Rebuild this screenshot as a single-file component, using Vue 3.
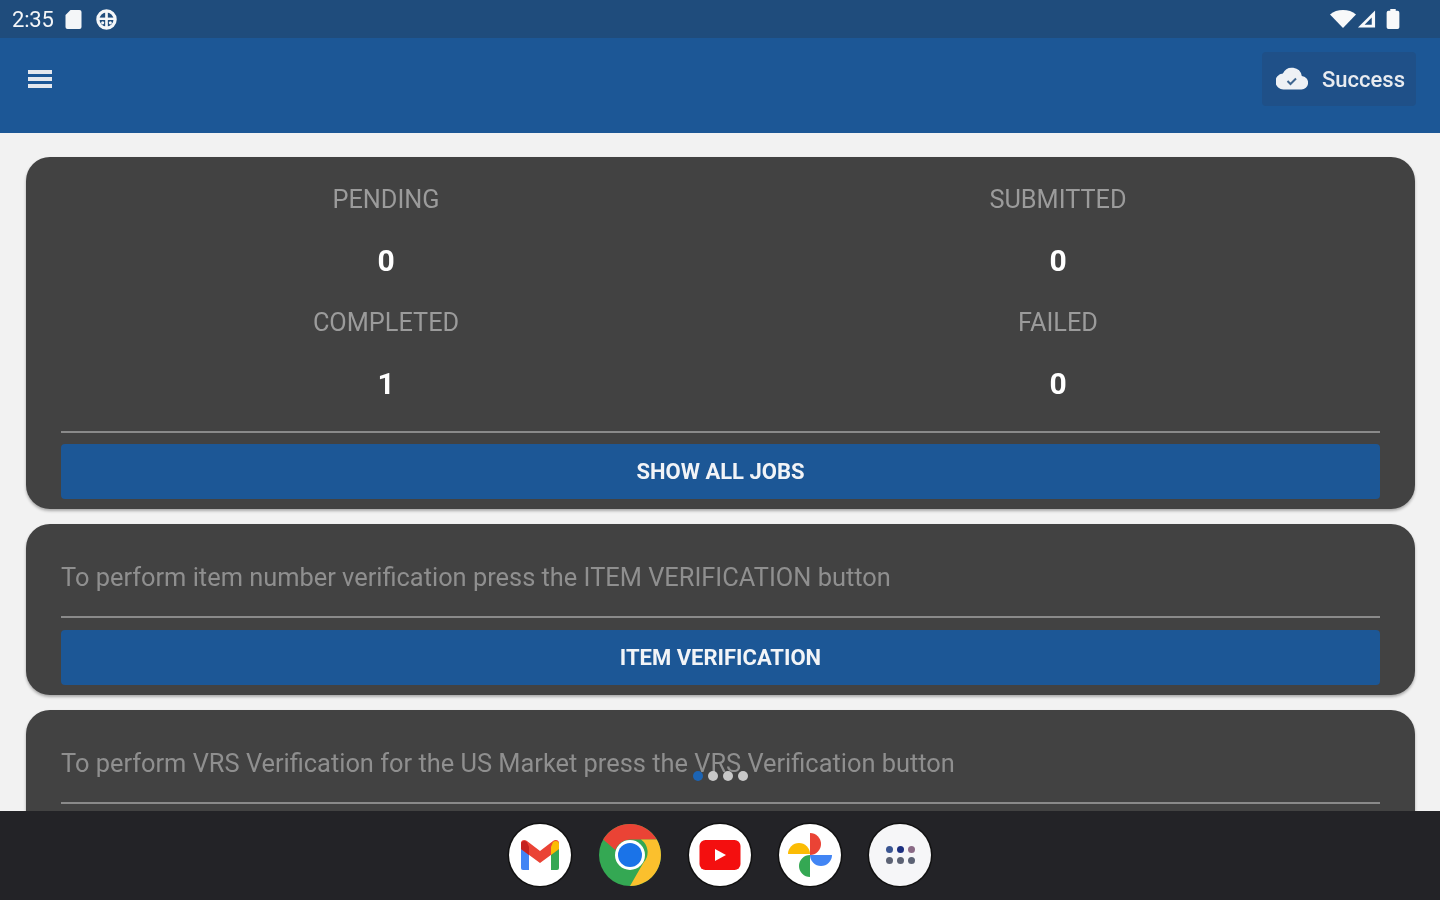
<template>
  <div class="screen">
    <div class="statusBar">
      <div class="statusLeft">
        <span class="clock">2:35</span>
        <svg class="sd" viewBox="0 0 16 20" width="17" height="20">
          <path d="M5 1h9a2 2 0 0 1 2 2v15a2 2 0 0 1-2 2H2a2 2 0 0 1-2-2V6z" fill="#f4f6f8" />
        </svg>
        <svg class="globe" viewBox="0 0 24 24" width="23" height="23">
          <circle cx="12" cy="12" r="9" fill="none" stroke="#f4f6f8" stroke-width="3.4" />
          <path d="M3 10h18v2.500H3z" fill="#f4f6f8" />
          <path d="M10.600 3h2.800v18h-2.800z" fill="#f4f6f8" />
          <circle cx="8" cy="15.500" r="1.600" fill="#f4f6f8" />
          <circle cx="16" cy="15.500" r="1.600" fill="#f4f6f8" />
        </svg>
      </div>
      <div class="statusRight">
        <svg viewBox="0 0 26 20" width="26" height="20">
          <path d="M0 5.500C3.500 2.400 8 1 13 1s9.500 1.400 13 4.500L13 19z" fill="#f8f9fa" />
        </svg>
        <svg viewBox="0 0 20 20" width="19" height="20">
          <path d="M19 1v18H1z" fill="#f8f9fa" />
          <path d="M15.500 8.500v7.500H8z" fill="#1f4c7c" />
        </svg>
        <svg viewBox="0 0 14 22" width="14" height="20">
          <path d="M4 2V0h6v2h2a2 2 0 0 1 2 2v16a2 2 0 0 1-2 2H2a2 2 0 0 1-2-2V4a2 2 0 0 1 2-2z" fill="#f8f9fa" />
        </svg>
      </div>
    </div>

    <header class="appBar">
      <button class="menu" aria-label="Menu">
        <span></span><span></span><span></span>
      </button>
      <div class="sync">
        <svg viewBox="0 0 32 24" width="32" height="24">
          <path d="M25.800 9.100A10 10 0 0 0 6.900 6.500 8 8 0 0 0 8 22.500h17a6.700 6.700 0 0 0 .8-13.400z" fill="#eef1f5" />
          <path d="M11.500 14l3 3 5.500-5.500" fill="none" stroke="#3f6690" stroke-width="2" />
        </svg>
        <span>Success</span>
      </div>
    </header>

    <main class="content">
      <section class="card">
        <div class="stats">
          <div v-for="s in stats" :key="s.label" class="stat">
            <div class="statLabel">{{ s.label }}</div>
            <div class="statValue">{{ s.value }}</div>
          </div>
        </div>
        <div class="rule statsRule"></div>
        <button class="action">SHOW ALL JOBS</button>
      </section>

      <section class="card">
        <p class="hint">To perform item number verification press the ITEM VERIFICATION button</p>
        <div class="rule"></div>
        <button class="action">ITEM VERIFICATION</button>
      </section>

      <section class="card">
        <p class="hint">To perform VRS Verification for the US Market press the VRS Verification button</p>
        <div class="rule"></div>
        <button class="action">VRS VERIFICATION</button>
      </section>
    </main>

    <div class="pager">
      <i class="on"></i><i></i><i></i><i></i>
    </div>

    <footer class="dock">
      <div class="app">
        <svg viewBox="0 0 40 32" width="40" height="32">
          <path d="M1 9v20a2 2 0 0 0 2 2h6V14z" fill="#4285f4" />
          <path d="M31 14v17h6a2 2 0 0 0 2-2V9z" fill="#34a853" />
          <path d="M1 4v6l19 14 19-14V4c0-3-3.500-4-6-2L20 12 7 2C4.500 0 1 1 1 4z" fill="#ea4335" />
          <path d="M31 8v8l8-6V5c0-3-3.500-4-6-2z" fill="#fbbc04" />
          <path d="M1 5v5l8 6V8L7 3C4.500 1 1 2 1 5z" fill="#c5221f" />
        </svg>
      </div>
      <div class="app chrome">
        <svg viewBox="0 0 62 62" width="62" height="62">
          <circle cx="31" cy="31" r="31" fill="#34a853" />
          <path d="M31 0a31 31 0 0 1 26.800 15.500H31a15.500 15.500 0 0 0-14.700 10.600L4.200 15.500A31 31 0 0 1 31 0z" fill="#ea4335" />
          <path d="M57.800 15.500A31 31 0 0 1 31 62l13.400-23.200A15.500 15.500 0 0 0 42 15.500z" fill="#fbc02d" />
          <circle cx="31" cy="31" r="15" fill="#fff" />
          <circle cx="31" cy="31" r="12" fill="#1a73e8" />
        </svg>
      </div>
      <div class="app">
        <svg viewBox="0 0 42 32" width="42" height="32">
          <rect width="41" height="30" x="0.500" y="1" rx="6" fill="#f40f0f" />
          <path d="M16 10l11 6-11 6z" fill="#fff" />
        </svg>
      </div>
      <div class="app">
        <svg viewBox="0 0 46 46" width="46" height="46">
          <path d="M23 23H1a11 11 0 0 1 22 0z" fill="#fbbc04" transform="translate(0 -1)" />
          <path d="M23 23V1a11 11 0 0 1 0 22z" fill="#ea4335" />
          <path d="M23 23h22a11 11 0 0 1-22 0z" fill="#4285f4" />
          <path d="M23 23v22a11 11 0 0 1 0-22z" fill="#34a853" />
        </svg>
      </div>
      <div class="app dots">
        <i v-for="(c, n) in dots" :key="n" :style="{ background: c }"></i>
      </div>
    </footer>
  </div>
</template>

<script setup>
const stats = [
  { label: "PENDING", value: 0 },
  { label: "SUBMITTED", value: 0 },
  { label: "COMPLETED", value: 1 },
  { label: "FAILED", value: 0 },
];

const dots = ["#3a5592", "#1c2f80", "#8a6a86", "#5c6274", "#5c6274", "#5c6274"];
</script>

<style>
html, body { margin: 0; overflow: hidden; }
</style>

<style scoped>
.screen {
  width: 1440px;
  height: 900px;
  display: flex;
  flex-direction: column;
  position: relative;
  overflow: hidden;
  background: #f2f2f2;
  font-family: Roboto, "Liberation Sans", sans-serif;
  filter: blur(0.5px);
}

.statusBar {
  height: 38px;
  flex: none;
  display: flex;
  justify-content: space-between;
  align-items: center;
  padding: 0 40px 0 12px;
  background: #1f4c7c;
  color: #f4f6f8;
}
.statusLeft, .statusRight { display: flex; align-items: center; }
.statusLeft { gap: 11px; }
.statusLeft .globe { margin-left: 2px; }
.statusRight { gap: 3px; }
.statusRight svg:first-child { margin-right: -2px; }
.statusRight svg:last-child { margin-left: 7px; }
.clock { font-size: 22px; letter-spacing: -0.2px; }

.appBar {
  height: 95px;
  flex: none;
  display: flex;
  justify-content: space-between;
  align-items: flex-start;
  padding: 14px 24px 0 28px;
  box-sizing: border-box;
  background: #1c5796;
}
.menu {
  width: 24px;
  height: 18px;
  margin-top: 18px;
  padding: 0;
  border: 0;
  background: none;
  display: flex;
  flex-direction: column;
  justify-content: space-between;
}
.menu span { display: block; height: 4px; background: #e4e8ee; }

.sync {
  width: 154px;
  height: 54px;
  display: flex;
  align-items: center;
  gap: 14px;
  padding-left: 14px;
  box-sizing: border-box;
  border-radius: 4px;
  background: #1f5088;
  color: #e8ebf0;
  font-size: 22px;
  font-weight: 500;
}

.content {
  flex: 1;
  min-height: 0;
  display: flex;
  flex-direction: column;
  gap: 15px;
  padding: 24px 25px 0 26px;
}

.card {
  flex: none;
  padding: 0 35px 10px;
  border-radius: 24px;
  background: #424242;
  box-shadow: 0 2px 3px rgba(0, 0, 0, 0.3);
}

.stats {
  display: grid;
  grid-template-columns: 1fr 1fr;
  margin: 0 -14px 0 -11px;
  padding-top: 12px;
  text-align: center;
}
.statLabel {
  height: 61px;
  line-height: 61px;
  font-size: 25.3px;
  color: #9b9b9b;
}
.statValue {
  height: 62px;
  line-height: 62px;
  font-size: 30px;
  font-weight: 700;
  color: #fff;
}

.rule { height: 2px; background: #8a8a8a; }
.statsRule { margin-top: 16px; }

.hint {
  margin: 0;
  height: 92px;
  line-height: 106px;
  box-sizing: border-box;
  font-size: 25.4px;
  color: #8f8f8f;
  white-space: nowrap;
}

.action {
  display: block;
  width: 100%;
  height: 55px;
  margin-top: 12px;
  border: 0;
  border-radius: 4px;
  background: #1c5796;
  color: #f2f4f7;
  font: 700 22px Roboto, "Liberation Sans", sans-serif;
}
.statsRule + .action { margin-top: 11px; }

.pager {
  position: absolute;
  left: 693px;
  top: 771px;
  display: flex;
  gap: 5px;
}
.pager i { width: 10px; height: 10px; border-radius: 50%; background: #c8c8c8; }
.pager .on { background: #1c64b4; }

.dock {
  position: absolute;
  left: 0;
  right: 0;
  bottom: 0;
  height: 89px;
  display: flex;
  justify-content: center;
  align-items: center;
  gap: 28px;
  padding-bottom: 1px;
  box-sizing: border-box;
  background: #232327;
}
.app {
  width: 62px;
  height: 62px;
  border-radius: 50%;
  background: #fff;
  display: flex;
  justify-content: center;
  align-items: center;
  box-shadow: 0 0 0 1.5px #111;
}
.chrome { background: none; box-shadow: none; }
.dots {
  display: grid;
  grid-template-columns: repeat(3, 7px);
  gap: 4px 4px;
  align-content: center;
  justify-content: center;
  background: #f6f6f8;
}
.dots i { width: 7px; height: 7px; border-radius: 50%; }
</style>
